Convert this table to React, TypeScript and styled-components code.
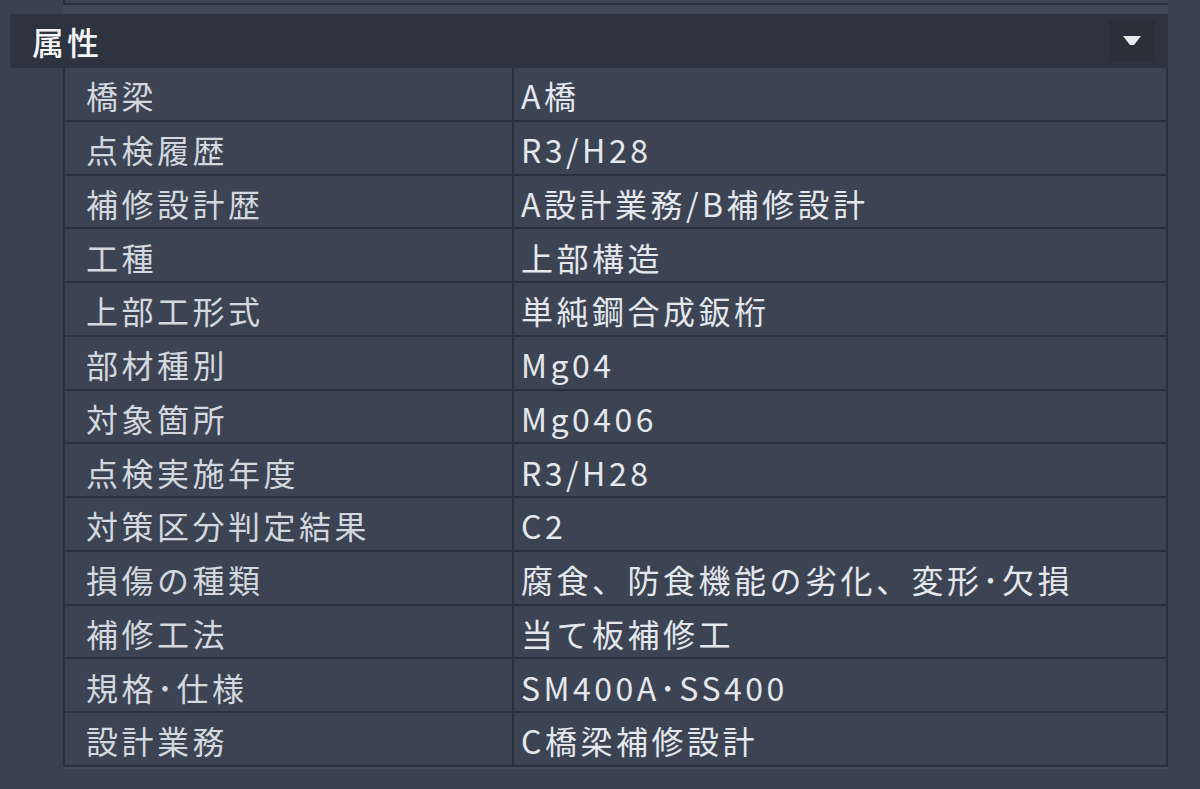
import * as React from 'react'
import styled, { createGlobalStyle } from 'styled-components'

const GlobalStyle = createGlobalStyle`
  html, body {
    margin: 0;
    padding: 0;
    background: #3a4251;
  }
  body {
    width: 1200px;
    height: 789px;
    overflow: hidden;
    font-family: "Noto Sans CJK JP", "Noto Sans", sans-serif;
  }
`

const Page = styled.div`
  display: flex;
  flex-direction: column;
  padding-right: 32px;
`

const PrevTableEdge = styled.div`
  margin-left: 63px;
  height: 3px;
  background: #3d4555;
  border-left: 2px solid #2a303b;
  border-bottom: 2px solid #2a303b;
`

const Spacer = styled.div`
  margin-left: 63px;
  height: 9px;
  background: #414958;
`

const Section = styled.section`
  margin-left: 10px;
  display: flex;
  flex-direction: column;
`

const Header = styled.div`
  height: 54px;
  background: #2d333f;
  display: flex;
  align-items: center;
  justify-content: space-between;
  padding-left: 22px;
  padding-right: 13px;
  box-sizing: border-box;
`

const Title = styled.span`
  color: #f4f6f8;
  font-size: 32px;
  font-weight: 500;
  letter-spacing: 3px;
`

const ToggleButton = styled.div`
  width: 46px;
  height: 42px;
  display: flex;
  align-items: center;
  justify-content: center;
  background: #2a2f3a;
`

const Table = styled.div`
  margin-left: 53px;
  display: grid;
  grid-template-columns: 447px 1fr;
  border-left: 2px solid #2a303b;
  border-right: 2px solid #2a303b;
  background: #3c4454;
`

const Cell = styled.div<{ $value?: boolean }>`
  height: 53.75px;
  box-sizing: border-box;
  display: flex;
  align-items: center;
  padding-left: ${p => (p.$value ? '7px' : '21px')};
  padding-top: 3px;
  border-bottom: 2px solid #2a303b;
  border-left: ${p => (p.$value ? '2px solid #2a303b' : 'none')};
  color: ${p => (p.$value ? '#e4e7ec' : '#d3d7de')};
  font-size: 32px;
  letter-spacing: 3.5px;
  white-space: nowrap;
`

const BottomEdge = styled.div`
  margin-left: 63px;
  height: 2px;
  background: #444c5b;
`

const ROWS: [string, string][] = [
  ['橋梁', 'A橋'],
  ['点検履歴', 'R3/H28'],
  ['補修設計歴', 'A設計業務/B補修設計'],
  ['工種', '上部構造'],
  ['上部工形式', '単純鋼合成鈑桁'],
  ['部材種別', 'Mg04'],
  ['対象箇所', 'Mg0406'],
  ['点検実施年度', 'R3/H28'],
  ['対策区分判定結果', 'C2'],
  ['損傷の種類', '腐食、防食機能の劣化、変形･欠損'],
  ['補修工法', '当て板補修工'],
  ['規格･仕様', 'SM400A･SS400'],
  ['設計業務', 'C橋梁補修設計'],
]

const App: React.FC = () => (
  <Page>
    <GlobalStyle />
    <PrevTableEdge />
    <Spacer />
    <Section>
      <Header>
        <Title>属性</Title>
        <ToggleButton>
          <svg width="20" height="12" viewBox="0 0 20 12">
            <path d="M1 1 H19 L12 10 H8 Z" fill="#e8ebf0" />
          </svg>
        </ToggleButton>
      </Header>
      <Table>
        {ROWS.map(([label, value]) => (
          <React.Fragment key={label}>
            <Cell>{label}</Cell>
            <Cell $value>{value}</Cell>
          </React.Fragment>
        ))}
      </Table>
    </Section>
    <BottomEdge />
  </Page>
)

export default App
